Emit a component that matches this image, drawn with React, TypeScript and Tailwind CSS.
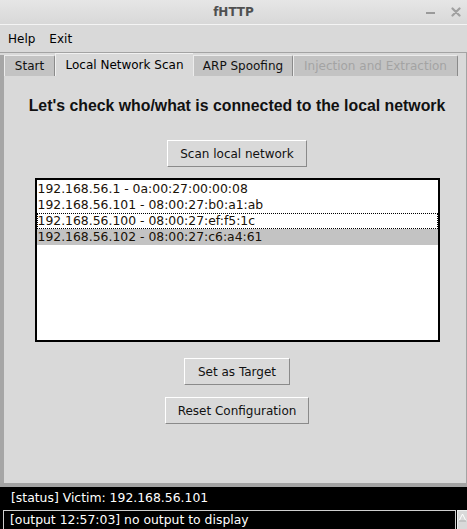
import React from 'react';

const hosts = [
  '192.168.56.1 - 0a:00:27:00:00:08',
  '192.168.56.101 - 08:00:27:b0:a1:ab',
  '192.168.56.100 - 08:00:27:ef:f5:1c',
  '192.168.56.102 - 08:00:27:c6:a4:61',
];

const tabs = [
  { label: 'Start', width: 'w-[51px]', active: false, disabled: false },
  { label: 'Local Network Scan', width: 'w-[138px]', active: true, disabled: false },
  { label: 'ARP Spoofing', width: 'w-[100px]', active: false, disabled: false },
  { label: 'Injection and Extraction', width: 'w-[165px]', active: false, disabled: true },
];

function TkButton({ label, width }: { label: string; width: string }) {
  return (
    <button
      className={`${width} h-[27px] shrink-0 bg-[#d9d9d9] text-[12px] text-[#111] border border-t-white border-l-white border-r-[#8a8a8a] border-b-[#8a8a8a] flex items-center justify-center`}
    >
      {label}
    </button>
  );
}

export default function App() {
  const selected = 3;
  const focused = 2;

  return (
    <div className="w-[467px] h-[529px] overflow-hidden flex flex-col bg-[#d9d9d9] font-['DejaVu_Sans',sans-serif] text-black">
      {/* Title bar */}
      <div className="h-[25px] shrink-0 relative flex items-center justify-center bg-gradient-to-b from-[#e6e6e6] to-[#d8d8d8] border-b border-[#f4f4f4]">
        <span className="text-[12px] font-bold text-[#505050]">fHTTP</span>
        <div className="absolute right-[6px] top-0 h-[24px] flex items-center gap-[16px]">
          <div className="w-[9px] h-[2px] bg-[#9a9a9a] mt-[2px]" />
          <svg width="10" height="10" viewBox="0 0 10 10">
            <path d="M1.5 1.5 L8.5 8.5 M8.5 1.5 L1.5 8.5" stroke="#a0a0a0" strokeWidth="2.2" strokeLinecap="round" />
          </svg>
        </div>
      </div>

      {/* Menu bar */}
      <div className="h-[28px] shrink-0 flex items-center gap-[14px] pl-[8px] text-[12px] border-b border-[#a3a3a3]">
        <span>Help</span>
        <span>Exit</span>
      </div>

      {/* Notebook */}
      <div className="flex-1 flex min-h-0">
        <div className="w-[4px] bg-[#a6a6a6] mt-[2px]" />
        <div className="flex-1 flex flex-col border-r border-[#a3a3a3]">
          <div className="h-[23px] shrink-0 flex items-end">
            {tabs.map((tab) =>
              tab.active ? (
                <div
                  key={tab.label}
                  className={`${tab.width} h-[23px] flex items-center justify-center text-[12px] bg-[#d9d9d9] border-l border-t border-[#f0f0f0] pb-[1px]`}
                >
                  {tab.label}
                </div>
              ) : (
                <div
                  key={tab.label}
                  className={`${tab.width} h-[21px] flex items-center justify-center text-[12px] bg-[#c3c3c3] border-l border-t border-l-[#ececec] border-t-[#ececec] border-r border-r-[#8a8a8a] rounded-tr-[2px] ${
                    tab.disabled ? 'text-[#a3a3a3]' : 'text-[#111]'
                  }`}
                >
                  {tab.label}
                </div>
              )
            )}
          </div>

          <div className="flex-1 flex flex-col items-center pl-[4px] bg-[#d9d9d9]">
            <h1 className="mt-[20px] leading-[20px] text-[15.85px] font-bold font-['Liberation_Sans',sans-serif] text-[#111] whitespace-nowrap">
              Let's check who/what is connected to the local network
            </h1>

            <div className="mt-[24px]">
              <TkButton label="Scan local network" width="w-[140px]" />
            </div>

            <div className="mt-[11px] w-[405px] h-[164px] shrink-0 bg-white border-2 border-black pt-[1px]">
              {hosts.map((h, i) => (
                <div
                  key={h}
                  className={`h-[16px] leading-[16px] px-[1px] text-[12.4px] whitespace-nowrap text-[#1a1208] ${
                    i === selected ? 'bg-[#c3c3c3]' : ''
                  } ${i === focused ? 'outline outline-1 outline-dotted outline-black -outline-offset-1' : ''}`}
                >
                  {h}
                </div>
              ))}
            </div>

            <div className="mt-[16px]">
              <TkButton label="Set as Target" width="w-[106px]" />
            </div>
            <div className="mt-[12px]">
              <TkButton label="Reset Configuration" width="w-[144px]" />
            </div>
          </div>
        </div>
      </div>

      {/* Status area */}
      <div className="h-[4px] shrink-0 bg-[#a3a3a3]" />
      <div className="h-[42px] shrink-0 bg-black flex flex-col">
        <div className="h-[24px] flex items-center pl-[11px] text-[12.4px] text-white">
          [status] Victim: 192.168.56.101
        </div>
        <div className="flex-1 flex">
          <div className="ml-[3px] w-[453px] border-l border-t border-r border-[#cfcfcf] pl-[6px] text-[12.4px] leading-[18px] text-white whitespace-nowrap">
            [output 12:57:03] no output to display
          </div>
          <div className="ml-[1px] flex-1 bg-[#d9d9d9] border-l border-t border-[#f0f0f0] flex justify-center pt-[2px]">
            <svg width="9" height="9" viewBox="0 0 9 9">
              <path d="M4.5 1 L8 8 L1 8 Z" fill="#d9d9d9" stroke="#ffffff" strokeWidth="1" />
              <path d="M8 8 L1 8" stroke="#9a9a9a" strokeWidth="1" />
            </svg>
          </div>
        </div>
      </div>
    </div>
  );
}
